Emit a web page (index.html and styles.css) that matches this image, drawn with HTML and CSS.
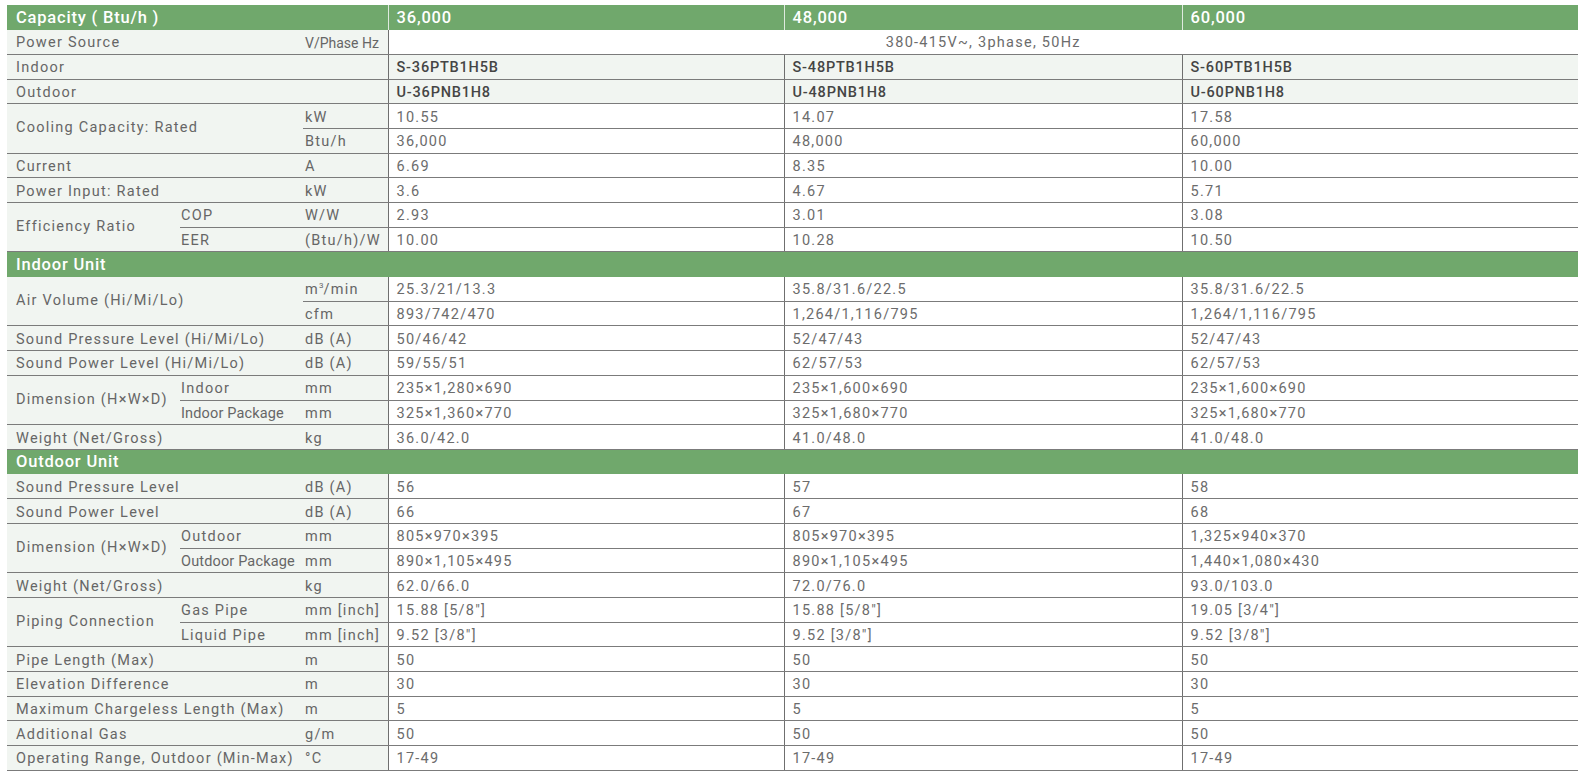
FILE: index.html
```html
<!DOCTYPE html>
<html lang="en">
<head>
<meta charset="utf-8">
<title>Specifications</title>
<link rel="stylesheet" href="styles.css">
</head>
<body>
<table class="spec">
  <colgroup>
    <col class="c-label"><col class="c-sub"><col class="c-unit">
    <col class="c-val1"><col class="c-val2"><col class="c-val3">
  </colgroup>
  <tr class="head">
    <th colspan="3">Capacity ( Btu/h )</th><th class="hv">36,000</th><th class="hv">48,000</th><th class="hv">60,000</th>
  </tr>
  <tr class="ps">
    <td class="l" colspan="2">Power Source</td><td class="u small">V/Phase Hz</td>
    <td class="v center" colspan="3">380-415V~, 3phase, 50Hz</td>
  </tr>
  <tr class="model">
    <td class="l" colspan="3">Indoor</td><td class="v">S-36PTB1H5B</td><td class="v">S-48PTB1H5B</td><td class="v">S-60PTB1H5B</td>
  </tr>
  <tr class="model">
    <td class="l" colspan="3">Outdoor</td><td class="v">U-36PNB1H8</td><td class="v">U-48PNB1H8</td><td class="v">U-60PNB1H8</td>
  </tr>
  <tr>
    <td class="l mid" colspan="2" rowspan="2">Cooling Capacity: Rated</td><td class="u">kW</td>
    <td class="v">10.55</td><td class="v">14.07</td><td class="v">17.58</td>
  </tr>
  <tr>
    <td class="u">Btu/h</td><td class="v">36,000</td><td class="v">48,000</td><td class="v">60,000</td>
  </tr>
  <tr>
    <td class="l" colspan="2">Current</td><td class="u">A</td><td class="v">6.69</td><td class="v">8.35</td><td class="v">10.00</td>
  </tr>
  <tr>
    <td class="l" colspan="2">Power Input: Rated</td><td class="u">kW</td><td class="v">3.6</td><td class="v">4.67</td><td class="v">5.71</td>
  </tr>
  <tr>
    <td class="l mid" rowspan="2">Efficiency Ratio</td><td class="s">COP</td><td class="u">W/W</td>
    <td class="v">2.93</td><td class="v">3.01</td><td class="v">3.08</td>
  </tr>
  <tr>
    <td class="s">EER</td><td class="u">(Btu/h)/W</td><td class="v">10.00</td><td class="v">10.28</td><td class="v">10.50</td>
  </tr>
  <tr class="section"><th colspan="6">Indoor Unit</th></tr>
  <tr>
    <td class="l mid" colspan="2" rowspan="2">Air Volume (Hi/Mi/Lo)</td><td class="u">m<sup>3</sup>/min</td>
    <td class="v">25.3/21/13.3</td><td class="v">35.8/31.6/22.5</td><td class="v">35.8/31.6/22.5</td>
  </tr>
  <tr>
    <td class="u">cfm</td><td class="v">893/742/470</td><td class="v">1,264/1,116/795</td><td class="v">1,264/1,116/795</td>
  </tr>
  <tr>
    <td class="l" colspan="2">Sound Pressure Level (Hi/Mi/Lo)</td><td class="u">dB (A)</td>
    <td class="v">50/46/42</td><td class="v">52/47/43</td><td class="v">52/47/43</td>
  </tr>
  <tr>
    <td class="l" colspan="2">Sound Power Level (Hi/Mi/Lo)</td><td class="u">dB (A)</td>
    <td class="v">59/55/51</td><td class="v">62/57/53</td><td class="v">62/57/53</td>
  </tr>
  <tr>
    <td class="l mid" rowspan="2">Dimension (H×W×D)</td><td class="s">Indoor</td><td class="u">mm</td>
    <td class="v">235×1,280×690</td><td class="v">235×1,600×690</td><td class="v">235×1,600×690</td>
  </tr>
  <tr>
    <td class="s narrow">Indoor Package</td><td class="u">mm</td>
    <td class="v">325×1,360×770</td><td class="v">325×1,680×770</td><td class="v">325×1,680×770</td>
  </tr>
  <tr>
    <td class="l" colspan="2">Weight (Net/Gross)</td><td class="u">kg</td>
    <td class="v">36.0/42.0</td><td class="v">41.0/48.0</td><td class="v">41.0/48.0</td>
  </tr>
  <tr class="section"><th colspan="6">Outdoor Unit</th></tr>
  <tr>
    <td class="l" colspan="2">Sound Pressure Level</td><td class="u">dB (A)</td>
    <td class="v">56</td><td class="v">57</td><td class="v">58</td>
  </tr>
  <tr>
    <td class="l" colspan="2">Sound Power Level</td><td class="u">dB (A)</td>
    <td class="v">66</td><td class="v">67</td><td class="v">68</td>
  </tr>
  <tr>
    <td class="l mid" rowspan="2">Dimension (H×W×D)</td><td class="s">Outdoor</td><td class="u">mm</td>
    <td class="v">805×970×395</td><td class="v">805×970×395</td><td class="v">1,325×940×370</td>
  </tr>
  <tr>
    <td class="s narrow">Outdoor Package</td><td class="u">mm</td>
    <td class="v">890×1,105×495</td><td class="v">890×1,105×495</td><td class="v">1,440×1,080×430</td>
  </tr>
  <tr>
    <td class="l" colspan="2">Weight (Net/Gross)</td><td class="u">kg</td>
    <td class="v">62.0/66.0</td><td class="v">72.0/76.0</td><td class="v">93.0/103.0</td>
  </tr>
  <tr>
    <td class="l mid" rowspan="2">Piping Connection</td><td class="s">Gas Pipe</td><td class="u">mm [inch]</td>
    <td class="v">15.88 [5/8"]</td><td class="v">15.88 [5/8"]</td><td class="v">19.05 [3/4"]</td>
  </tr>
  <tr>
    <td class="s">Liquid Pipe</td><td class="u">mm [inch]</td>
    <td class="v">9.52 [3/8"]</td><td class="v">9.52 [3/8"]</td><td class="v">9.52 [3/8"]</td>
  </tr>
  <tr>
    <td class="l" colspan="2">Pipe Length (Max)</td><td class="u">m</td><td class="v">50</td><td class="v">50</td><td class="v">50</td>
  </tr>
  <tr>
    <td class="l" colspan="2">Elevation Difference</td><td class="u">m</td><td class="v">30</td><td class="v">30</td><td class="v">30</td>
  </tr>
  <tr>
    <td class="l" colspan="2">Maximum Chargeless Length (Max)</td><td class="u">m</td><td class="v">5</td><td class="v">5</td><td class="v">5</td>
  </tr>
  <tr>
    <td class="l" colspan="2">Additional Gas</td><td class="u">g/m</td><td class="v">50</td><td class="v">50</td><td class="v">50</td>
  </tr>
  <tr>
    <td class="l" colspan="2">Operating Range, Outdoor (Min-Max)</td><td class="u">°C</td><td class="v">17-49</td><td class="v">17-49</td><td class="v">17-49</td>
  </tr>
</table>
</body>
</html>
```

FILE: styles.css
```css
html, body {
  margin: 0;
  padding: 0;
  background: #ffffff;
}

body {
  padding: 5px 0 0 7px;
  font-family: Roboto, "Liberation Sans", sans-serif;
}

.spec {
  border-collapse: collapse;
  table-layout: fixed;
  width: 1571px;
  font-size: 14.5px;
  letter-spacing: 1.25px;
  color: #666666;
}

.c-label { width: 173px; }
.c-sub { width: 123px; }
.c-unit { width: 85px; }
.c-val1 { width: 396px; }
.c-val2 { width: 398px; }
.c-val3 { width: 396px; }

.spec tr {
  height: 24.7px;
}

.spec td,
.spec th {
  padding: 3px 0 0 0;
  line-height: 16px;
  white-space: nowrap;
  overflow: hidden;
  vertical-align: middle;
  text-align: left;
}

.spec td {
  border-bottom: 1px solid #7b7b7b;
}

.spec td.l {
  background: #f1f5f1;
  padding-left: 9px;
}

.spec td.s {
  background: #f1f5f1;
  padding-left: 1px;
}

.spec td.u {
  background: #f1f5f1;
  padding-left: 2px;
}

.spec td.v {
  border-left: 1px solid #6f6f6f;
  padding-left: 8px;
  color: #6c6c6c;
}

.spec td.center {
  text-align: center;
  padding-left: 0;
}

.spec td.small {
  font-size: 14px;
  letter-spacing: 0;
}

.spec td.narrow {
  letter-spacing: 0.15px;
}

.spec td.mid {
  padding-top: 0;
}

.spec sup {
  font-size: 8px;
  line-height: 0;
  vertical-align: 6px;
  letter-spacing: 0;
}

.spec tr.model td.v {
  background: #f1f5f1;
  color: #454545;
  font-weight: 500;
  letter-spacing: 0.8px;
}

.spec tr.head th,
.spec tr.section th {
  background: #70a86c;
  color: #ffffff;
  font-size: 16.5px;
  font-weight: 500;
  letter-spacing: 0.8px;
  padding-left: 9px;
  padding-top: 1px;
}

.spec tr.head th.hv {
  border-left: 1px solid #dfeadf;
  padding-left: 8px;
}

.spec tr.section th {
  border-bottom: 0;
}
```
